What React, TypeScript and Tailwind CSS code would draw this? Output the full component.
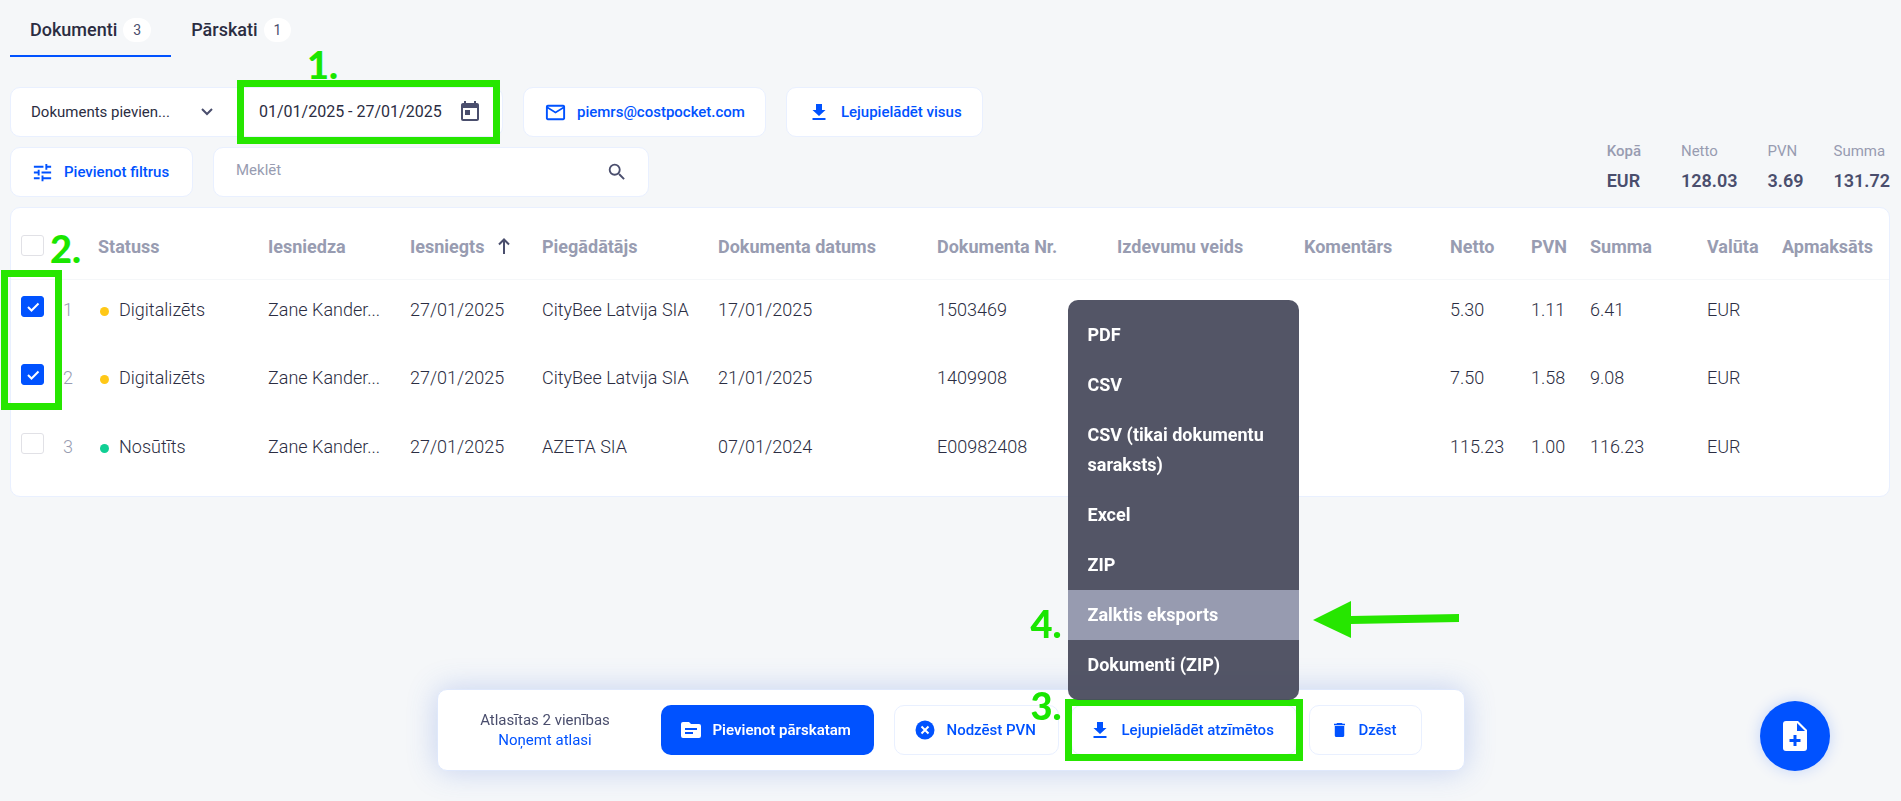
import React, { useState } from 'react';
import { MdMailOutline, MdSearch, MdToday, MdTune } from 'react-icons/md';

const columns = [
  { label: 'Statuss', width: 'w-[170px]' },
  { label: 'Iesniedza', width: 'w-[142px]' },
  { label: 'Iesniegts', width: 'w-[132px]' },
  { label: 'Piegādātājs', width: 'w-[176px]' },
  { label: 'Dokumenta datums', width: 'w-[219px]' },
  { label: 'Dokumenta Nr.', width: 'w-[180px]' },
  { label: 'Izdevumu veids', width: 'w-[187px]' },
  { label: 'Komentārs', width: 'w-[146px]' },
  { label: 'Netto', width: 'w-[81px]' },
  { label: 'PVN', width: 'w-[59px]' },
  { label: 'Summa', width: 'w-[117px]' },
  { label: 'Valūta', width: 'w-[75px]' },
  { label: 'Apmaksāts', width: 'w-[107px]' },
];

const documents = [
  { id: 1, status: 'Digitalizēts', dot: 'bg-[#ffc817]', user: 'Zane Kander...', sent: '27/01/2025', supplier: 'CityBee Latvija SIA', date: '17/01/2025', nr: '1503469', netto: '5.30', pvn: '1.11', sum: '6.41' },
  { id: 2, status: 'Digitalizēts', dot: 'bg-[#ffc817]', user: 'Zane Kander...', sent: '27/01/2025', supplier: 'CityBee Latvija SIA', date: '21/01/2025', nr: '1409908', netto: '7.50', pvn: '1.58', sum: '9.08' },
  { id: 3, status: 'Nosūtīts', dot: 'bg-[#10cf94]', user: 'Zane Kander...', sent: '27/01/2025', supplier: 'AZETA SIA', date: '07/01/2024', nr: 'E00982408', netto: '115.23', pvn: '1.00', sum: '116.23' },
];

const totals = [
  { label: 'Netto', value: '128.03' },
  { label: 'PVN', value: '3.69' },
  { label: 'Summa', value: '131.72' },
];

const exportOptions = ['PDF', 'CSV', 'CSV (tikai dokumentu saraksts)', 'Excel', 'ZIP', 'Zalktis eksports', 'Dokumenti (ZIP)'];

const boxButton = 'flex h-[50px] shrink-0 items-center whitespace-nowrap rounded-[10px] border border-[#e9f0ff] bg-white text-[15px] font-medium text-[#0052ff]';
const stepNumber = "pointer-events-none absolute font-['Lato',sans-serif] text-[38px] leading-12 font-black text-[#1ae600]";

function DownloadIcon() {
  return (
    <svg width="24" height="24" viewBox="0 0 24 24" fill="currentColor" aria-hidden="true">
      <path d="M9 4h6v6h3.500L12 16 5.500 10H9z" />
      <path d="M5.500 18h13v2h-13z" />
    </svg>
  );
}

function Checkbox({ checked, onChange, label }: { checked: boolean; onChange: () => void; label: string }) {
  return (
    <label className="relative block h-[21px] w-[23px]">
      <input
        type="checkbox"
        aria-label={label}
        checked={checked}
        onChange={onChange}
        className="peer block h-[21px] w-[23px] appearance-none rounded-[3px] border border-[#e1e1e6] bg-white checked:border-[#0052ff] checked:bg-[#0052ff]"
      />
      <svg className="pointer-events-none absolute inset-0 hidden peer-checked:block" width="23" height="21" viewBox="0 0 23 21" fill="none" stroke="white" strokeWidth="2">
        <path d="M7 11l3.500 3.500 7-7" />
      </svg>
    </label>
  );
}

function App() {
  const [selected, setSelected] = useState<number[]>([1, 2]);

  const toggle = (id: number) => {
    setSelected(selected.includes(id) ? selected.filter((s) => s !== id) : [...selected, id]);
  };

  const toggleAll = () => {
    setSelected(selected.length === documents.length ? [] : documents.map((d) => d.id));
  };

  return (
    <div className="relative min-h-screen overflow-hidden bg-[#f5f7f9] pr-[11px] pl-2.5 font-['Roboto',sans-serif] text-[#2b2d42]">
      <nav className="flex h-[57px] text-lg font-medium">
        <a href="#dokumenti" className="flex items-center gap-1.5 border-b-2 border-[#0052ff] px-5 pt-1">
          Dokumenti
          <span className="rounded-full bg-white px-2.5 text-sm leading-6 font-normal text-[#4a4e6d]">3</span>
        </a>
        <a href="#parskati" className="flex items-center gap-1.5 border-b-2 border-transparent px-5 pt-1">
          Pārskati
          <span className="rounded-full bg-white px-2.5 text-sm leading-6 font-normal text-[#4a4e6d]">1</span>
        </a>
      </nav>

      <div className="mt-[30px] flex gap-5">
        <div className="flex h-[50px] w-[493px] rounded-[10px] border border-[#e9f0ff] bg-white">
          <button type="button" className="flex w-[226px] items-center justify-between pr-6 pl-5 text-[15px]">
            Dokuments pievien...
            <svg width="12" height="8" viewBox="0 0 12 8" fill="none" stroke="#4a4e6d" strokeWidth="2" aria-hidden="true">
              <path d="M1 1l5 5 5-5" />
            </svg>
          </button>
          <div className="relative flex-1">
            <button type="button" className="flex h-full w-full items-center justify-between pr-5 pl-[22px] text-base">
              01/01/2025 - 27/01/2025
              <MdToday size={24} className="text-[#4a4e6d]" />
            </button>
            <div className="pointer-events-none absolute -inset-y-2 left-0 w-[263px] border-[7px] border-[#26e600]" />
            <span className={`${stepNumber} -top-12 left-[70px]`}>1.</span>
          </div>
        </div>
        <button type="button" className={`${boxButton} gap-2.5 px-5`}>
          <MdMailOutline size={23} />
          piemrs@costpocket.com
        </button>
        <button type="button" className={`${boxButton} gap-2.5 px-5`}>
          <DownloadIcon />
          Lejupielādēt visus
        </button>
      </div>

      <div className="mt-2.5 flex gap-5">
        <button type="button" className={`${boxButton} w-[183px] gap-2.5 px-5`}>
          <MdTune size={23} />
          Pievienot filtrus
        </button>
        <label className="flex h-[50px] w-[436px] items-center rounded-[10px] border border-[#e9f0ff] bg-white pr-5 pl-[22px]">
          <input type="text" aria-label="Meklēt" placeholder="Meklēt" className="min-w-0 flex-1 pb-1 text-[15px] outline-none placeholder:text-[#989cb1]" />
          <MdSearch size={22} className="text-[#4a4e6d]" />
        </label>
        <div className="-mt-1.5 ml-auto flex h-14 gap-[30px] text-[15px] leading-5 text-[#989cb1]">
          <div className="pr-2.5">
            <p className="font-medium">Kopā</p>
            <p className="text-lg leading-10 font-semibold text-[#4a4e6d]">EUR</p>
          </div>
          {totals.map((t) => (
            <div key={t.label}>
              <p>{t.label}</p>
              <p className="text-lg leading-10 font-semibold text-[#4a4e6d]">{t.value}</p>
            </div>
          ))}
        </div>
      </div>

      <div className="relative mt-2.5 rounded-[10px] border border-[#e9f0ff] bg-white pb-2.5">
        <table className="w-full table-fixed text-left text-lg">
          <thead>
            <tr className="h-[71px] border-b border-[#f5f7f9] text-[#989cb1]">
              <th className="w-[52px] pt-1 pl-2.5">
                <Checkbox label="Atlasīt visus" checked={selected.length === documents.length} onChange={toggleAll} />
              </th>
              <th className="w-[35px]" />
              {columns.map((c) => (
                <th key={c.label} className={`${c.width} pt-2 font-bold whitespace-nowrap`}>
                  {c.label}
                  {c.label === 'Iesniegts' && (
                    <svg className="ml-3.5 inline-block align-[-1px]" width="12" height="16" viewBox="0 0 12 16" fill="none" stroke="#4a4e6d" strokeWidth="2" aria-hidden="true">
                      <path d="M6 16V2M1 6.500l5-5 5 5" />
                    </svg>
                  )}
                </th>
              ))}
            </tr>
          </thead>
          <tbody className="font-light">
            {documents.map((d) => (
              <tr key={d.id} className="h-[69px] align-top leading-7">
                <td className="pt-4 pl-2.5">
                  <Checkbox label={`Atlasīt ${d.id}`} checked={selected.includes(d.id)} onChange={() => toggle(d.id)} />
                </td>
                <td className="pt-4 text-[#989cb1]">{d.id}</td>
                <td className="pt-4">
                  <span className={`mr-2.5 ml-0.5 inline-block h-[9px] w-[9px] rounded-full ${d.dot}`} />
                  {d.status}
                </td>
                <td className="pt-4">{d.user}</td>
                <td className="pt-4">{d.sent}</td>
                <td className="pt-4 whitespace-nowrap">{d.supplier}</td>
                <td className="pt-4">{d.date}</td>
                <td className="pt-4">{d.nr}</td>
                <td />
                <td />
                <td className="pt-4">{d.netto}</td>
                <td className="pt-4">{d.pvn}</td>
                <td className="pt-4">{d.sum}</td>
                <td className="pt-4">EUR</td>
                <td />
              </tr>
            ))}
          </tbody>
        </table>
        <div className="pointer-events-none absolute top-[62px] -left-2.5 h-[140px] w-[61px] border-[7px] border-[#26e600]" />
        <span className={`${stepNumber} top-4 left-[39px]`}>2.</span>
      </div>

      {/* bulk actions */}
      <div className="fixed bottom-[30px] left-1/2 flex h-[82px] w-[1028px] -translate-x-1/2 items-center gap-5 rounded-[10px] border border-[#dfe8fb] bg-white px-10 shadow-[0_0_30px_rgba(70,110,220,0.28)]">
        <div className="w-[135px] shrink-0 text-center text-[15px] leading-5 whitespace-nowrap text-[#4a4e6d]">
          <p>Atlasītas {selected.length} vienības</p>
          <button type="button" onClick={() => setSelected([])} className="text-[#0052ff]">Noņemt atlasi</button>
        </div>
        <button type="button" className="ml-7 flex h-[50px] w-[213px] shrink-0 items-center gap-3 rounded-[10px] bg-[#0052ff] px-5 text-[15px] font-semibold whitespace-nowrap text-white">
          <svg width="20" height="16" viewBox="0 0 20 16" aria-hidden="true">
            <path d="M2 0h6l2 2h8a2 2 0 012 2v10a2 2 0 01-2 2H2a2 2 0 01-2-2V2a2 2 0 012-2z" fill="white" />
            <path d="M4 7h12M4 11h8" stroke="#0052ff" strokeWidth="2" />
          </svg>
          Pievienot pārskatam
        </button>
        <button type="button" className={`${boxButton} w-[165px] gap-3 px-5`}>
          <svg width="20" height="20" viewBox="0 0 20 20" aria-hidden="true">
            <circle cx="10" cy="10" r="9.500" fill="#0052ff" />
            <path d="M6.500 6.500l7 7M13.500 6.500l-7 7" stroke="white" strokeWidth="2" />
          </svg>
          Nodzēst PVN
        </button>
        <div className="relative -mx-2">
          <button type="button" className={`${boxButton} w-[226px] gap-2.5 px-4`}>
            <DownloadIcon />
            Lejupielādēt atzīmētos
          </button>
          <div className="pointer-events-none absolute -inset-1.5 border-[7px] border-[#26e600]" />
          <span className={`${stepNumber} -top-6 -left-10`}>3.</span>
          <span className={`${stepNumber} -top-[106px] -left-10`}>4.</span>
          <ul className="absolute bottom-[55px] -left-[3px] w-[231px] overflow-hidden rounded-[10px] bg-[#484a5c]/94 py-2.5 text-lg leading-[30px] font-bold text-white">
            {exportOptions.map((o) => (
              <li key={o}>
                <button type="button" className={`block w-full px-5 py-2.5 text-left ${o === 'Zalktis eksports' ? 'bg-[#979bb0]' : ''}`}>{o}</button>
              </li>
            ))}
          </ul>
          <svg className="absolute -top-[104px] left-[242px]" width="146" height="38" viewBox="0 0 146 38" fill="#26e600" aria-hidden="true">
            <path d="M0 19L38 0v15l108-2v8L38 23v14z" />
          </svg>
        </div>
        <button type="button" className={`${boxButton} w-[113px] gap-3.5 px-6`}>
          <svg width="14" height="18" viewBox="0 0 14 18" fill="currentColor" aria-hidden="true">
            <path d="M4 0h6l1 1h3v2H0V1h3zM1 4h12v12a2 2 0 01-2 2H3a2 2 0 01-2-2z" />
          </svg>
          Dzēst
        </button>
      </div>

      <button type="button" aria-label="Pievienot dokumentu" className="fixed right-[71px] bottom-[30px] flex h-[70px] w-[70px] items-center justify-center rounded-full bg-[#0052ff] shadow-[0_0_15px_rgba(0,82,255,0.2)]">
        <svg width="24" height="30" viewBox="0 0 24 30" aria-hidden="true">
          <path d="M3 0h12l9 9v18a3 3 0 01-3 3H3a3 3 0 01-3-3V3a3 3 0 013-3z" fill="white" />
          <path d="M14 2v8h8z" fill="#0052ff" />
          <path d="M12 14v11M6.500 19.500h11" stroke="#0052ff" strokeWidth="3" />
        </svg>
      </button>
    </div>
  );
}

export default App;
